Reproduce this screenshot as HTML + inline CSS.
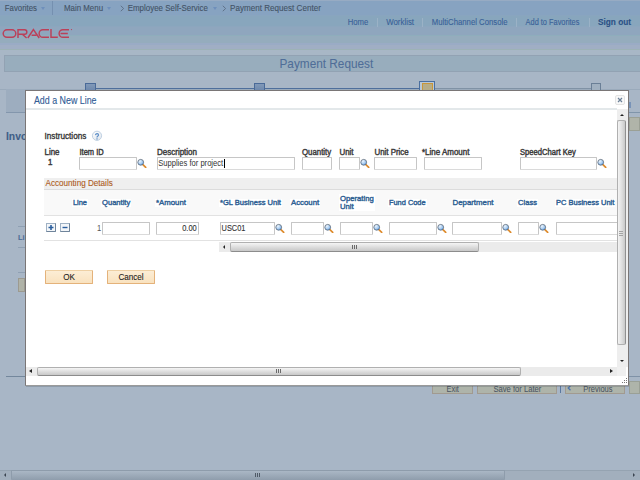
<!DOCTYPE html>
<html><head><meta charset="utf-8"><title>Payment Request</title>
<style>
*{margin:0;padding:0;box-sizing:border-box}
html,body{width:640px;height:480px;overflow:hidden}
body{position:relative;background:#a8b6c6;font-family:"Liberation Sans",sans-serif}
.t{position:absolute;white-space:nowrap;-webkit-text-stroke:0.1px currentColor}
.b{position:absolute}
</style></head><body>
<svg width="0" height="0" style="position:absolute"><defs><radialGradient id="lg" cx="0.35" cy="0.3" r="0.75"><stop offset="0" stop-color="#eef6fd"/><stop offset="0.6" stop-color="#a9cdf2"/><stop offset="1" stop-color="#5b9ae0"/></radialGradient></defs></svg>
<div class="b" style="left:0px;top:0px;width:640px;height:15px;background:#87a3c1;"></div>
<div class="b" style="left:0px;top:0px;width:640px;height:1px;background:#97abc3;"></div>
<div class="b" style="left:0px;top:15px;width:640px;height:1px;background:#89a5bf;"></div>
<div class="b" style="left:0px;top:16px;width:640px;height:10px;background:#88a6bd;"></div>
<div class="b" style="left:0px;top:26px;width:640px;height:1px;background:#8ca6be;"></div>
<div class="b" style="left:0px;top:27px;width:640px;height:8px;background:#8fa6be;"></div>
<div class="b" style="left:0px;top:35px;width:640px;height:1px;background:#8eadbc;"></div>
<div class="b" style="left:0px;top:36px;width:640px;height:7px;background:#95acbd;"></div>
<div class="b" style="left:0px;top:43px;width:640px;height:2px;background:#9aabc5;"></div>
<div class="b" style="left:0px;top:45px;width:640px;height:4px;background:#a0aec4;"></div>
<div class="b" style="left:0px;top:49px;width:640px;height:1px;background:#9db2b6;"></div>
<div class="b" style="left:0px;top:50px;width:640px;height:5px;background:#a8b7c6;"></div>
<div class="t" style="left:4.80px;top:5.00px;color:#435366;font-size:7.8px;line-height:7.8px;transform:scaleY(1.099);transform-origin:0 6.60px;">Favorites</div>
<div class="t" style="left:64.00px;top:5.00px;color:#435366;font-size:7.9px;line-height:7.9px;transform:scaleY(1.086);transform-origin:0 6.69px;">Main Menu</div>
<div class="t" style="left:127.70px;top:5.00px;color:#435366;font-size:7.94px;line-height:7.94px;transform:scaleY(1.08);transform-origin:0 6.72px;">Employee Self-Service</div>
<div class="t" style="left:230.00px;top:5.00px;color:#435366;font-size:8.1px;line-height:8.1px;transform:scaleY(1.059);transform-origin:0 6.86px;">Payment Request Center</div>
<div class="b" style="left:40.5px;top:7px;width:0;height:0;border-left:2.5px solid transparent;border-right:2.5px solid transparent;border-top:3px solid #6e8fbb;"></div>
<div class="b" style="left:106.5px;top:7px;width:0;height:0;border-left:2.5px solid transparent;border-right:2.5px solid transparent;border-top:3px solid #6e8fbb;"></div>
<div class="b" style="left:212.5px;top:7px;width:0;height:0;border-left:2.5px solid transparent;border-right:2.5px solid transparent;border-top:3px solid #6e8fbb;"></div>
<svg class="b" style="left:119.5px;top:5px" width="5" height="7"><path d="M0.8 0.8 L3.6 3.5 L0.8 6.2" fill="none" stroke="#5b6d83" stroke-width="0.9"/></svg>
<svg class="b" style="left:221.5px;top:5px" width="5" height="7"><path d="M0.8 0.8 L3.6 3.5 L0.8 6.2" fill="none" stroke="#5b6d83" stroke-width="0.9"/></svg>
<div class="b" style="left:52px;top:1px;width:1px;height:14px;background:#7590b0;"></div>
<div class="t" style="left:347.75px;top:19.00px;color:#3a6198;font-size:7.7px;line-height:7.7px;transform:scaleY(1.114);transform-origin:0 6.52px;">Home</div>
<div class="t" style="left:386.25px;top:19.00px;color:#3a6198;font-size:7.85px;line-height:7.85px;transform:scaleY(1.092);transform-origin:0 6.65px;">Worklist</div>
<div class="t" style="left:431.70px;top:19.00px;color:#3a6198;font-size:7.75px;line-height:7.75px;transform:scaleY(1.107);transform-origin:0 6.56px;">MultiChannel Console</div>
<div class="t" style="left:525.60px;top:19.00px;color:#3a6198;font-size:7.4px;line-height:7.4px;transform:scaleY(1.159);transform-origin:0 6.26px;">Add to Favorites</div>
<div class="t" style="left:598.00px;top:19.00px;color:#2b5085;font-size:8.25px;line-height:8.25px;transform:scaleY(1.039);transform-origin:0 6.98px;font-weight:bold;">Sign out</div>
<div class="b" style="left:377px;top:18px;width:1px;height:9px;background:#9bb2c6;"></div>
<div class="b" style="left:422px;top:18px;width:1px;height:9px;background:#9bb2c6;"></div>
<div class="b" style="left:516px;top:18px;width:1px;height:9px;background:#9bb2c6;"></div>
<div class="b" style="left:589px;top:18px;width:1px;height:9px;background:#9bb2c6;"></div>
<svg class="b" style="left:0;top:26px" width="80" height="14" viewBox="0 26 80 14">
<g fill="none" stroke="#bb4059" stroke-width="1.45">
<rect x="3.2" y="29.8" width="12.6" height="7.5" rx="3.75"/>
<path d="M18 38 V29.8 H24.6 A2.25 2.25 0 0 1 24.6 34.3 H18.5 M22.3 34.3 L26.6 38"/>
<path d="M27.8 38 L33.4 29.6 L39.2 38 M31.6 35.3 H36.4"/>
<path d="M49 29.7 H42.9 A3.8 3.8 0 0 0 42.9 37.3 H49"/>
<path d="M51 29.1 V37.3 H57.8"/>
<path d="M69 29.7 H62.9 A3.8 3.8 0 0 0 62.9 37.3 H69 M60.5 33.5 H67.8"/>
</g><circle cx="71.5" cy="29.6" r="0.6" fill="#bb4059"/></svg>
<div class="b" style="left:4px;top:55px;width:640px;height:17px;background:#98adbd;border:1px solid #92a2b3;border-right:none;"></div>
<div class="t" style="left:279.50px;top:59.00px;color:#4f6d98;font-size:11.8px;line-height:11.8px;transform:scaleY(1.05);transform-origin:0 9.99px;-webkit-text-stroke:0.05px currentColor;">Payment Request</div>
<div class="b" style="left:0px;top:89px;width:640px;height:1px;background:#9aaabb;"></div>
<div class="b" style="left:96px;top:88px;width:323px;height:1px;background:#4f6f9c;"></div>
<div class="b" style="left:435px;top:88px;width:156px;height:1px;background:#8092a5;"></div>
<div class="b" style="left:85px;top:83px;width:11px;height:8px;background:linear-gradient(#8199b8,#6f89ad);border:1px solid #4a6a98;"></div>
<div class="b" style="left:254px;top:83px;width:11px;height:8px;background:linear-gradient(#8199b8,#6f89ad);border:1px solid #4a6a98;"></div>
<div class="b" style="left:591px;top:83px;width:10px;height:8px;background:#a0b0c0;border:1px solid #6a7f96;"></div>
<div class="b" style="left:419px;top:81px;width:16px;height:10px;background:#b9c8d6;border:1px solid #4a6fa0;border-bottom:none;"></div>
<div class="b" style="left:422px;top:83px;width:11px;height:8px;background:#b6ad88;border:1px solid #c8963a;border-bottom:none;"></div>
<div class="b" style="left:6px;top:89px;width:19px;height:23px;background:#9dadbf;"></div>
<div class="b" style="left:6px;top:112px;width:19px;height:1px;background:#8396ac;"></div>
<div class="t" style="left:6.00px;top:132.00px;color:#3f5f88;font-size:10.3px;line-height:10.3px;transform:scaleY(1.0);transform-origin:0 8.72px;font-weight:bold;">Invo</div>
<div class="b" style="left:18px;top:226px;width:7px;height:1px;background:#8fa0b3;"></div>
<div class="t" style="left:18.00px;top:234.00px;color:#4d6d98;font-size:7.3px;line-height:7.3px;transform:scaleY(1.0);transform-origin:0 6.18px;font-weight:bold;">Li</div>
<div class="b" style="left:18px;top:247px;width:7px;height:1px;background:#8fa0b3;"></div>
<div class="b" style="left:18px;top:272px;width:7px;height:1px;background:#8fa0b3;"></div>
<div class="b" style="left:18px;top:278px;width:7px;height:14px;background:#b0b3a8;border:1px solid #9c9a90;"></div>
<div class="b" style="left:6px;top:376px;width:19px;height:1px;background:#73879c;"></div>
<div class="b" style="left:629px;top:112px;width:11px;height:1px;background:#8095aa;"></div>
<div class="b" style="left:629px;top:117px;width:11px;height:14px;background:#b0b4a9;border:1px solid #9ba095;"></div>
<div class="b" style="left:629px;top:102px;width:1.5px;height:6px;background:#7893b8;"></div>
<div class="b" style="left:432px;top:381px;width:41px;height:13px;background:#aeb4aa;border:1px solid #a19a90;"></div>
<div class="b" style="left:477px;top:381px;width:80px;height:13px;background:#aeb4aa;border:1px solid #a19a90;"></div>
<div class="b" style="left:565px;top:381px;width:60px;height:13px;background:#aeb4aa;border:1px solid #a19a90;"></div>
<div class="t" style="left:446.60px;top:386.00px;color:#4b5563;font-size:7.4px;line-height:7.4px;transform:scaleY(1.159);transform-origin:0 6.26px;-webkit-text-stroke:0.05px currentColor;">Exit</div>
<div class="t" style="left:493.40px;top:386.00px;color:#4b5563;font-size:7.65px;line-height:7.65px;transform:scaleY(1.121);transform-origin:0 6.48px;-webkit-text-stroke:0.05px currentColor;">Save for Later</div>
<div class="t" style="left:583.30px;top:386.00px;color:#4b5563;font-size:7.5px;line-height:7.5px;transform:scaleY(1.143);transform-origin:0 6.35px;-webkit-text-stroke:0.05px currentColor;">Previous</div>
<svg class="b" style="left:567px;top:385px" width="5" height="6"><path d="M3.5 0.8 L1.2 3 L3.5 5.2" fill="none" stroke="#4f76ad" stroke-width="1.3"/></svg>
<div class="b" style="left:629px;top:381px;width:11px;height:13px;background:#aeb4aa;border:1px solid #9aa096;"></div>
<div class="b" style="left:629px;top:376px;width:11px;height:1px;background:#7f92a7;"></div>
<div class="b" style="left:560px;top:385px;width:1px;height:8px;background:#5a78a0;"></div>
<div class="b" style="left:0px;top:470px;width:640px;height:10px;background:#a2afbd;border-top:1px solid #95a3b1;"></div>
<div class="b" style="left:11px;top:470px;width:494px;height:10px;background:linear-gradient(#aab7c5,#8f9dac);border:1px solid #8e9cab;border-bottom:none;border-radius:1px;"></div>
<div class="b" style="left:4px;top:473px;width:0;height:0;border-top:2.5px solid transparent;border-bottom:2.5px solid transparent;border-right:2.5px solid #3a4450;"></div>
<div class="b" style="left:633px;top:473px;width:0;height:0;border-top:2.5px solid transparent;border-bottom:2.5px solid transparent;border-left:2.5px solid #3a4450;"></div>
<div class="b" style="left:255px;top:473px;width:1px;height:4px;background:#4f5a66;"></div>
<div class="b" style="left:257px;top:473px;width:1px;height:4px;background:#4f5a66;"></div>
<div class="b" style="left:259px;top:473px;width:1px;height:4px;background:#4f5a66;"></div>
<div class="b" style="left:26px;top:386px;width:603px;height:1px;background:rgba(50,60,70,0.22);"></div>
<div class="b" style="left:25px;top:90px;width:604px;height:296px;background:#fff;border:1px solid #7a7676;border-bottom-color:#9a9a9a;"></div>
<div class="t" style="left:33.90px;top:97.00px;color:#325d96;font-size:8.9px;line-height:8.9px;transform:scaleY(1.2);transform-origin:0 7.53px;">Add a New Line</div>
<div class="b" style="left:26px;top:108px;width:591px;height:2px;background:#e3e8ea;"></div>
<div class="b" style="left:615px;top:95px;width:10px;height:10px;background:#f8f8f8;border:1px solid #e4e4e4;border-radius:2px;"></div>
<svg class="b" style="left:615px;top:95px" width="10" height="10"><path d="M3 3 L7 7 M7 3 L3 7" stroke="#6b8098" stroke-width="1.2"/></svg>
<div class="t" style="left:44.50px;top:133.00px;color:#333;font-size:8.2px;line-height:8.2px;transform:scaleY(1.046);transform-origin:0 6.94px;-webkit-text-stroke:0.3px currentColor;">Instructions</div>
<svg class="b" style="left:91px;top:130px" width="12" height="12"><defs><linearGradient id="hg" x1="0" y1="0" x2="0.6" y2="1"><stop offset="0" stop-color="#ffffff"/><stop offset="1" stop-color="#e3e8ee"/></linearGradient></defs><circle cx="6" cy="5.8" r="4.6" fill="url(#hg)" stroke="#b9cce0" stroke-width="0.9"/><path d="M4.5 5.1 Q4.7 3.7 6.1 3.7 Q7.5 3.7 7.5 4.9 Q7.5 5.8 6.6 6.3 Q6 6.7 6 7.5" fill="none" stroke="#5a8cc6" stroke-width="1.2"/><rect x="5.4" y="8.3" width="1.2" height="1.2" fill="#5a8cc6"/></svg>
<div class="t" style="left:44.50px;top:149.00px;color:#3c3c3c;font-size:7.9px;line-height:7.9px;transform:scaleY(1.086);transform-origin:0 6.69px;-webkit-text-stroke:0.4px currentColor;">Line</div>
<div class="t" style="left:48.00px;top:159.00px;color:#3c3c3c;font-size:7.9px;line-height:7.9px;transform:scaleY(1.086);transform-origin:0 6.69px;-webkit-text-stroke:0.4px currentColor;">1</div>
<div class="t" style="left:79.50px;top:149.00px;color:#3c3c3c;font-size:7.5px;line-height:7.5px;transform:scaleY(1.143);transform-origin:0 6.35px;-webkit-text-stroke:0.4px currentColor;">Item ID</div>
<div class="t" style="left:157.00px;top:149.00px;color:#3c3c3c;font-size:8.0px;line-height:8.0px;transform:scaleY(1.072);transform-origin:0 6.77px;-webkit-text-stroke:0.4px currentColor;">Description</div>
<div class="t" style="left:302.00px;top:149.00px;color:#3c3c3c;font-size:7.85px;line-height:7.85px;transform:scaleY(1.092);transform-origin:0 6.65px;-webkit-text-stroke:0.4px currentColor;">Quantity</div>
<div class="t" style="left:339.50px;top:149.00px;color:#3c3c3c;font-size:7.9px;line-height:7.9px;transform:scaleY(1.086);transform-origin:0 6.69px;-webkit-text-stroke:0.4px currentColor;">Unit</div>
<div class="t" style="left:374.50px;top:149.00px;color:#3c3c3c;font-size:7.9px;line-height:7.9px;transform:scaleY(1.086);transform-origin:0 6.69px;-webkit-text-stroke:0.4px currentColor;">Unit Price</div>
<div class="t" style="left:422.00px;top:149.00px;color:#3c3c3c;font-size:7.97px;line-height:7.97px;transform:scaleY(1.076);transform-origin:0 6.75px;-webkit-text-stroke:0.4px currentColor;">*Line Amount</div>
<div class="t" style="left:520.00px;top:149.00px;color:#3c3c3c;font-size:7.6px;line-height:7.6px;transform:scaleY(1.128);transform-origin:0 6.43px;-webkit-text-stroke:0.4px currentColor;">SpeedChart Key</div>
<div class="b" style="left:79px;top:157px;width:58px;height:13px;background:#fff;border:1px solid #c6c6c6;border-bottom-color:#dadada;border-radius:1px;"></div>
<svg class="b" style="left:137px;top:158px" width="10" height="10" viewBox="0 0 10 10">
<path d="M5.9 6.7 L8.7 9.3" stroke="#dd8a2a" stroke-width="1.7" stroke-linecap="round"/>
<circle cx="3.7" cy="4.3" r="2.9" fill="url(#lg)" stroke="#5f6b78" stroke-width="0.8"/></svg>
<div class="b" style="left:157px;top:157px;width:138px;height:13px;background:#fff;border:1px solid #c6c6c6;border-bottom-color:#dadada;border-radius:1px;"></div>
<div class="t" style="left:158.20px;top:160.00px;color:#333;font-size:7.6px;line-height:7.6px;transform:scaleY(1.128);transform-origin:0 6.43px;-webkit-text-stroke:0;">Supplies for project</div>
<div class="b" style="left:224px;top:159px;width:1px;height:9px;background:#000;"></div>
<div class="b" style="left:302px;top:157px;width:30px;height:13px;background:#fff;border:1px solid #c6c6c6;border-bottom-color:#dadada;border-radius:1px;"></div>
<div class="b" style="left:339px;top:157px;width:21px;height:13px;background:#fff;border:1px solid #c6c6c6;border-bottom-color:#dadada;border-radius:1px;"></div>
<svg class="b" style="left:360px;top:158px" width="10" height="10" viewBox="0 0 10 10">
<path d="M5.9 6.7 L8.7 9.3" stroke="#dd8a2a" stroke-width="1.7" stroke-linecap="round"/>
<circle cx="3.7" cy="4.3" r="2.9" fill="url(#lg)" stroke="#5f6b78" stroke-width="0.8"/></svg>
<div class="b" style="left:374px;top:157px;width:43px;height:13px;background:#fff;border:1px solid #c6c6c6;border-bottom-color:#dadada;border-radius:1px;"></div>
<div class="b" style="left:424px;top:157px;width:58px;height:13px;background:#fff;border:1px solid #c6c6c6;border-bottom-color:#dadada;border-radius:1px;"></div>
<div class="b" style="left:520px;top:157px;width:77px;height:13px;background:#fff;border:1px solid #c6c6c6;border-bottom-color:#dadada;border-radius:1px;"></div>
<svg class="b" style="left:597px;top:158px" width="10" height="10" viewBox="0 0 10 10">
<path d="M5.9 6.7 L8.7 9.3" stroke="#dd8a2a" stroke-width="1.7" stroke-linecap="round"/>
<circle cx="3.7" cy="4.3" r="2.9" fill="url(#lg)" stroke="#5f6b78" stroke-width="0.8"/></svg>
<div class="b" style="left:44px;top:178px;width:573px;height:12px;background:#efefef;border-bottom:1px solid #dcdcdc;"></div>
<div class="t" style="left:45.50px;top:180.00px;color:#ad5b22;font-size:8.15px;line-height:8.15px;transform:scaleY(1.052);transform-origin:0 6.90px;">Accounting Details</div>
<div class="b" style="left:44px;top:190px;width:573px;height:26px;background:#f9f9f9;border-bottom:1px solid #e2e2e2;"></div>
<div class="t" style="left:73.00px;top:199.00px;color:#2f5f93;font-size:7.4px;line-height:7.4px;transform:scaleY(1.0);transform-origin:0 6.26px;-webkit-text-stroke:0.4px currentColor;background:#fff;padding:0.5px 1px;margin:-0.5px 0 0 -1px;">Line</div>
<div class="t" style="left:102.00px;top:199.00px;color:#2f5f93;font-size:7.6px;line-height:7.6px;transform:scaleY(1.0);transform-origin:0 6.43px;-webkit-text-stroke:0.4px currentColor;background:#fff;padding:0.5px 1px;margin:-0.5px 0 0 -1px;">Quantity</div>
<div class="t" style="left:156.00px;top:199.00px;color:#2f5f93;font-size:7.8px;line-height:7.8px;transform:scaleY(1.0);transform-origin:0 6.60px;-webkit-text-stroke:0.4px currentColor;background:#fff;padding:0.5px 1px;margin:-0.5px 0 0 -1px;">*Amount</div>
<div class="t" style="left:220.00px;top:199.00px;color:#2f5f93;font-size:7.55px;line-height:7.55px;transform:scaleY(1.0);transform-origin:0 6.39px;-webkit-text-stroke:0.4px currentColor;background:#fff;padding:0.5px 1px;margin:-0.5px 0 0 -1px;">*GL Business Unit</div>
<div class="t" style="left:291.00px;top:199.00px;color:#2f5f93;font-size:7.8px;line-height:7.8px;transform:scaleY(1.0);transform-origin:0 6.60px;-webkit-text-stroke:0.4px currentColor;background:#fff;padding:0.5px 1px;margin:-0.5px 0 0 -1px;">Account</div>
<div class="t" style="left:389.00px;top:199.00px;color:#2f5f93;font-size:7.4px;line-height:7.4px;transform:scaleY(1.0);transform-origin:0 6.26px;-webkit-text-stroke:0.4px currentColor;background:#fff;padding:0.5px 1px;margin:-0.5px 0 0 -1px;">Fund Code</div>
<div class="t" style="left:452.50px;top:199.00px;color:#2f5f93;font-size:7.85px;line-height:7.85px;transform:scaleY(1.0);transform-origin:0 6.65px;-webkit-text-stroke:0.4px currentColor;background:#fff;padding:0.5px 1px;margin:-0.5px 0 0 -1px;">Department</div>
<div class="t" style="left:518.00px;top:199.00px;color:#2f5f93;font-size:7.6px;line-height:7.6px;transform:scaleY(1.0);transform-origin:0 6.43px;-webkit-text-stroke:0.4px currentColor;background:#fff;padding:0.5px 1px;margin:-0.5px 0 0 -1px;">Class</div>
<div class="t" style="left:556.00px;top:199.00px;color:#2f5f93;font-size:7.5px;line-height:7.5px;transform:scaleY(1.0);transform-origin:0 6.35px;-webkit-text-stroke:0.4px currentColor;background:#fff;padding:0.5px 1px;margin:-0.5px 0 0 -1px;">PC Business Unit</div>
<div class="b" style="left:339px;top:194px;width:36px;height:17px;background:#fff;"></div>
<div class="t" style="left:340.00px;top:195.00px;color:#2f5f93;font-size:7.7px;line-height:7.7px;transform:scaleY(1.05);transform-origin:0 6.52px;-webkit-text-stroke:0.4px currentColor;">Operating</div>
<div class="t" style="left:340.00px;top:203.00px;color:#2f5f93;font-size:7.7px;line-height:7.7px;transform:scaleY(1.0);transform-origin:0 6.52px;-webkit-text-stroke:0.4px currentColor;">Unit</div>
<div class="b" style="left:44px;top:240px;width:573px;height:1px;background:#e2e2e2;"></div>
<svg class="b" style="left:46px;top:223px" width="25" height="9"><rect x="0.5" y="0.5" width="9" height="8" fill="#f3f6f9" stroke="#9fb1c4"/><path d="M9.5 0.5 V8.5 H0.5" fill="none" stroke="#6f849b"/><path d="M2.5 4.5 H7.5 M5 2 V7" stroke="#2b5f9e" stroke-width="1.6"/><rect x="14.5" y="0.5" width="9" height="8" fill="#f3f6f9" stroke="#9fb1c4"/><path d="M23.5 0.5 V8.5 H14.5" fill="none" stroke="#6f849b"/><path d="M16.5 4.5 H21.5" stroke="#2b5f9e" stroke-width="1.4"/></svg>
<div class="t" style="left:97.00px;top:225.00px;color:#555;font-size:7.6px;line-height:7.6px;transform:scaleY(1.128);transform-origin:0 6.43px;-webkit-text-stroke:0;">1</div>
<div class="b" style="left:102px;top:222px;width:48px;height:13px;background:#fff;border:1px solid #c6c6c6;border-bottom-color:#dadada;border-radius:1px;"></div>
<div class="b" style="left:156px;top:222px;width:43px;height:13px;background:#fff;border:1px solid #c6c6c6;border-bottom-color:#dadada;border-radius:1px;"></div>
<div class="t" style="left:182.20px;top:225.00px;color:#333;font-size:7.5px;line-height:7.5px;transform:scaleY(1.143);transform-origin:0 6.35px;-webkit-text-stroke:0.1px currentColor;">0.00</div>
<div class="b" style="left:220px;top:222px;width:55px;height:13px;background:#fff;border:1px solid #c6c6c6;border-bottom-color:#dadada;border-radius:1px;"></div>
<div class="t" style="left:221.60px;top:225.00px;color:#333;font-size:7.4px;line-height:7.4px;transform:scaleY(1.159);transform-origin:0 6.26px;-webkit-text-stroke:0.1px currentColor;">USC01</div>
<svg class="b" style="left:275px;top:223px" width="10" height="10" viewBox="0 0 10 10">
<path d="M5.9 6.7 L8.7 9.3" stroke="#dd8a2a" stroke-width="1.7" stroke-linecap="round"/>
<circle cx="3.7" cy="4.3" r="2.9" fill="url(#lg)" stroke="#5f6b78" stroke-width="0.8"/></svg>
<div class="b" style="left:291px;top:222px;width:33px;height:13px;background:#fff;border:1px solid #c6c6c6;border-bottom-color:#dadada;border-radius:1px;"></div>
<svg class="b" style="left:324px;top:223px" width="10" height="10" viewBox="0 0 10 10">
<path d="M5.9 6.7 L8.7 9.3" stroke="#dd8a2a" stroke-width="1.7" stroke-linecap="round"/>
<circle cx="3.7" cy="4.3" r="2.9" fill="url(#lg)" stroke="#5f6b78" stroke-width="0.8"/></svg>
<div class="b" style="left:340px;top:222px;width:33px;height:13px;background:#fff;border:1px solid #c6c6c6;border-bottom-color:#dadada;border-radius:1px;"></div>
<svg class="b" style="left:373px;top:223px" width="10" height="10" viewBox="0 0 10 10">
<path d="M5.9 6.7 L8.7 9.3" stroke="#dd8a2a" stroke-width="1.7" stroke-linecap="round"/>
<circle cx="3.7" cy="4.3" r="2.9" fill="url(#lg)" stroke="#5f6b78" stroke-width="0.8"/></svg>
<div class="b" style="left:389px;top:222px;width:48px;height:13px;background:#fff;border:1px solid #c6c6c6;border-bottom-color:#dadada;border-radius:1px;"></div>
<svg class="b" style="left:437px;top:223px" width="10" height="10" viewBox="0 0 10 10">
<path d="M5.9 6.7 L8.7 9.3" stroke="#dd8a2a" stroke-width="1.7" stroke-linecap="round"/>
<circle cx="3.7" cy="4.3" r="2.9" fill="url(#lg)" stroke="#5f6b78" stroke-width="0.8"/></svg>
<div class="b" style="left:452px;top:222px;width:50px;height:13px;background:#fff;border:1px solid #c6c6c6;border-bottom-color:#dadada;border-radius:1px;"></div>
<svg class="b" style="left:502px;top:223px" width="10" height="10" viewBox="0 0 10 10">
<path d="M5.9 6.7 L8.7 9.3" stroke="#dd8a2a" stroke-width="1.7" stroke-linecap="round"/>
<circle cx="3.7" cy="4.3" r="2.9" fill="url(#lg)" stroke="#5f6b78" stroke-width="0.8"/></svg>
<div class="b" style="left:518px;top:222px;width:21px;height:13px;background:#fff;border:1px solid #c6c6c6;border-bottom-color:#dadada;border-radius:1px;"></div>
<svg class="b" style="left:539px;top:223px" width="10" height="10" viewBox="0 0 10 10">
<path d="M5.9 6.7 L8.7 9.3" stroke="#dd8a2a" stroke-width="1.7" stroke-linecap="round"/>
<circle cx="3.7" cy="4.3" r="2.9" fill="url(#lg)" stroke="#5f6b78" stroke-width="0.8"/></svg>
<div class="b" style="left:556px;top:222px;width:70px;height:13px;background:#fff;border:1px solid #c6c6c6;border-bottom-color:#dadada;border-radius:1px;"></div>
<div class="b" style="left:219px;top:242px;width:398px;height:10px;background:#ebebeb;"></div>
<div class="b" style="left:223px;top:244.5px;width:0;height:0;border-top:2.5px solid transparent;border-bottom:2.5px solid transparent;border-right:2.5px solid #222;"></div>
<div class="b" style="left:230px;top:242px;width:249px;height:10px;background:linear-gradient(#f5f5f5,#dedede 50%,#c8c8c8);border:1px solid #b0b0b0;border-bottom-color:#8c8c8c;border-radius:2px;"></div>
<div class="b" style="left:352px;top:245px;width:1px;height:4px;background:#6a6a6a;"></div>
<div class="b" style="left:354px;top:245px;width:1px;height:4px;background:#6a6a6a;"></div>
<div class="b" style="left:356px;top:245px;width:1px;height:4px;background:#6a6a6a;"></div>
<div class="b" style="left:45px;top:270px;width:48px;height:14px;background:linear-gradient(#fcedd5,#f9e2bf);border:1px solid #e4b27a;border-top-color:#eed0a4;border-radius:1px;"></div>
<div class="t" style="left:45px;top:273.54px;width:48px;font-size:8.1px;line-height:8.1px;color:#1e1e1e;text-align:center;-webkit-text-stroke:0.1px currentColor;transform:scaleY(1.15);transform-origin:0 6.86px">OK</div>
<div class="b" style="left:107px;top:270px;width:48px;height:14px;background:linear-gradient(#fcedd5,#f9e2bf);border:1px solid #e4b27a;border-top-color:#eed0a4;border-radius:1px;"></div>
<div class="t" style="left:107px;top:273.54px;width:48px;font-size:8.1px;line-height:8.1px;color:#1e1e1e;text-align:center;-webkit-text-stroke:0.1px currentColor;transform:scaleY(1.15);transform-origin:0 6.86px">Cancel</div>
<div class="b" style="left:617px;top:109px;width:11px;height:258px;background:#eeeeee;"></div>
<div class="b" style="left:620px;top:114px;width:0;height:0;border-left:2.5px solid transparent;border-right:2.5px solid transparent;border-bottom:2.5px solid #222;"></div>
<div class="b" style="left:617px;top:120px;width:9px;height:225px;background:linear-gradient(90deg,#f4f4f4,#dedede 55%,#c9c9c9);border:1px solid #b0b0b0;border-right-color:#909090;border-radius:2px;"></div>
<div class="b" style="left:619px;top:231px;width:4px;height:1px;background:#a4a4a4;"></div>
<div class="b" style="left:619px;top:233px;width:4px;height:1px;background:#a4a4a4;"></div>
<div class="b" style="left:619px;top:235px;width:4px;height:1px;background:#a4a4a4;"></div>
<div class="b" style="left:620px;top:360px;width:0;height:0;border-left:2.5px solid transparent;border-right:2.5px solid transparent;border-top:2.5px solid #222;"></div>
<div class="b" style="left:26px;top:367px;width:591px;height:9px;background:#ebebeb;"></div>
<div class="b" style="left:29px;top:368.5px;width:0;height:0;border-top:2.5px solid transparent;border-bottom:2.5px solid transparent;border-right:3px solid #222;"></div>
<div class="b" style="left:37px;top:367px;width:484px;height:9px;background:linear-gradient(#f5f5f5,#dedede 50%,#c8c8c8);border:1px solid #b0b0b0;border-bottom-color:#8c8c8c;border-radius:2px;"></div>
<div class="b" style="left:276px;top:369px;width:1px;height:4px;background:#6a6a6a;"></div>
<div class="b" style="left:278px;top:369px;width:1px;height:4px;background:#6a6a6a;"></div>
<div class="b" style="left:280px;top:369px;width:1px;height:4px;background:#6a6a6a;"></div>
<div class="b" style="left:610px;top:368.5px;width:0;height:0;border-top:2.5px solid transparent;border-bottom:2.5px solid transparent;border-left:3px solid #222;"></div>
<div class="b" style="left:617px;top:367px;width:9px;height:9px;background:#f0f0f0;"></div>
<div class="b" style="left:626px;top:378px;width:1px;height:1px;background:#777;"></div>
<div class="b" style="left:624px;top:380px;width:1px;height:1px;background:#777;"></div>
<div class="b" style="left:626px;top:380px;width:1px;height:1px;background:#777;"></div>
<div class="b" style="left:622px;top:382px;width:1px;height:1px;background:#777;"></div>
<div class="b" style="left:624px;top:382px;width:1px;height:1px;background:#777;"></div>
<div class="b" style="left:626px;top:382px;width:1px;height:1px;background:#777;"></div>
</body></html>
